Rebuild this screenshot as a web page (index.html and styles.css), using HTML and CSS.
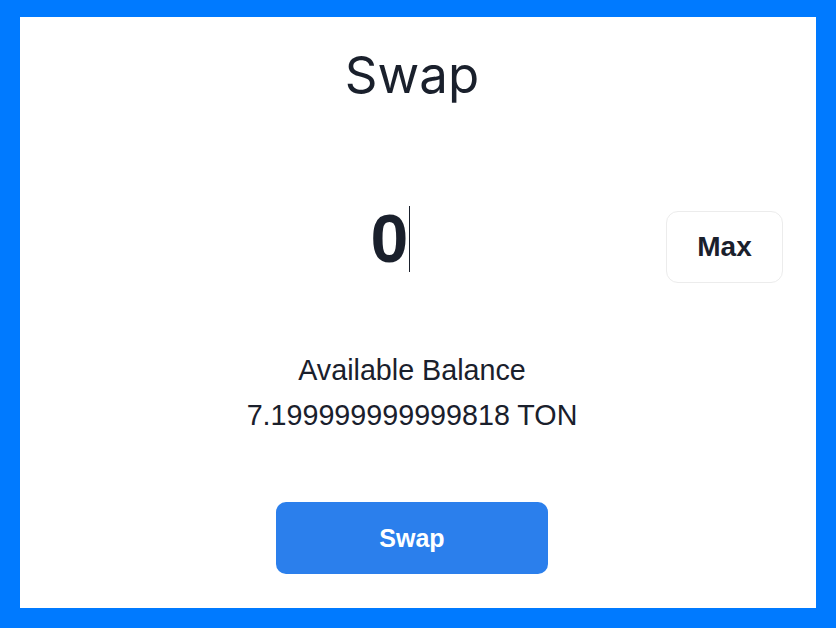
FILE: index.html
```html
<!DOCTYPE html>
<html>
<head>
<meta charset="utf-8">
<link rel="stylesheet" href="styles.css">
</head>
<body>
<main class="card">
  <h1 class="title">Swap</h1>
  <div class="amount-row">
    <div class="amount"><span class="amount-value">0</span><span class="caret"></span></div>
    <button class="max-btn">Max</button>
  </div>
  <div class="balance">
    <div>Available Balance</div>
    <div>7.199999999999818 TON</div>
  </div>
  <button class="swap-btn">Swap</button>
</main>
</body>
</html>
```
FILE: styles.css
```css
html, body {
  margin: 0;
  padding: 0;
  height: 100%;
}
body {
  background: #007aff;
  padding: 17px 20px 20px 20px;
  box-sizing: border-box;
  font-family: "Liberation Sans", Arial, sans-serif;
  color: #1a202c;
}
.card {
  background: #ffffff;
  height: 100%;
  box-sizing: border-box;
  padding-right: 12px;
  display: flex;
  flex-direction: column;
  align-items: center;
}
.title {
  margin: 0;
  padding-top: 26px;
  font-family: Inter, "Liberation Sans", sans-serif;
  font-weight: 400;
  font-size: 51px;
  line-height: 64px;
}
.amount-row {
  align-self: stretch;
  display: flex;
  align-items: center;
  margin-top: 104px;
  padding-left: 95px;
  padding-right: 21px;
}
.amount {
  flex: 1;
  display: flex;
  justify-content: center;
  align-items: center;
  height: 72px;
  padding-bottom: 18px;
  box-sizing: border-box;
}
.amount-value {
  font-size: 68px;
  font-weight: 700;
  line-height: 1;
}
.caret {
  display: inline-block;
  width: 1px;
  height: 66px;
  background: #1a202c;
  margin-left: 1px;
  position: relative;
  top: 1px;
}
.max-btn {
  width: 117px;
  height: 72px;
  background: #ffffff;
  border: 1px solid #ececec;
  border-radius: 12px;
  font-family: "Liberation Sans", Arial, sans-serif;
  font-weight: 700;
  font-size: 28px;
  color: #1a202c;
}
.balance {
  margin-top: 65px;
  text-align: center;
  font-size: 28.7px;
  line-height: 45px;
}
.swap-btn {
  margin-top: 64px;
  width: 272px;
  height: 72px;
  border: none;
  border-radius: 10px;
  background: #2b7fec;
  color: #ffffff;
  font-family: "Liberation Sans", Arial, sans-serif;
  font-weight: 700;
  font-size: 25px;
}
```
